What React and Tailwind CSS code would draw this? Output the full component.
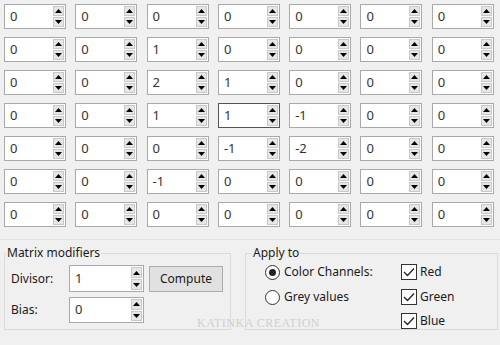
import React from "react";

const matrix = [
  [0, 0, 0, 0, 0, 0, 0],
  [0, 0, 1, 0, 0, 0, 0],
  [0, 0, 2, 1, 0, 0, 0],
  [0, 0, 1, 1, -1, 0, 0],
  [0, 0, 0, -1, -2, 0, 0],
  [0, 0, -1, 0, 0, 0, 0],
  [0, 0, 0, 0, 0, 0, 0],
];

const Arrow = ({ up }) => (
  <svg width="7" height="4" viewBox="0 0 7 4">
    <path d={up ? "M0 4 L3.5 0 L7 4 Z" : "M0 0 L3.5 4 L7 0 Z"} fill="#000" />
  </svg>
);

const Spin = ({ value, focused, className = "" }) => (
  <div
    className={`flex h-[25px] items-stretch bg-white border ${
      focused ? "border-[#555]" : "border-[#a9a9a9]"
    } ${className}`}
  >
    <div className="flex-1 flex items-center pl-[5px] text-[13px] text-[#333]">
      {value}
    </div>
    <div className="flex flex-col w-[11px] my-[1px] mr-[1px] gap-[1px]">
      <div className="flex-1 flex items-center justify-center bg-[#e6e6e6] border border-[#c9c9c9]">
        <Arrow up />
      </div>
      <div className="flex-1 flex items-center justify-center bg-[#e6e6e6] border border-[#c9c9c9]">
        <Arrow />
      </div>
    </div>
  </div>
);

const Check = () => (
  <div className="w-[16px] h-[16px] border border-[#333] bg-white flex items-center justify-center">
    <svg width="12" height="10" viewBox="0 0 12 10">
      <path d="M1 5 L4.5 8.5 L11 1.5" fill="none" stroke="#222" strokeWidth="1.3" />
    </svg>
  </div>
);

const Radio = ({ on }) => (
  <div className="w-[15px] h-[15px] rounded-full border border-[#333] bg-white flex items-center justify-center">
    {on && <div className="w-[7px] h-[7px] rounded-full bg-[#222]" />}
  </div>
);

export default function App() {
  return (
    <div
      className="w-[500px] h-[345px] bg-[#f0f0f0] overflow-hidden relative text-[#1a1a1a]"
      style={{ fontFamily: '"Noto Sans", "Open Sans", sans-serif' }}
    >
      <div className="grid grid-cols-[repeat(7,62px)] gap-x-[9.3px] gap-y-[8px] pl-[4px] pt-[4px]">
        {matrix.map((row, r) =>
          row.map((v, c) => (
            <Spin key={`${r}-${c}`} value={v} focused={r === 3 && c === 3} />
          ))
        )}
      </div>

      <div className="mt-[12px] border-t border-[#e2e2e2]" />

      <div className="flex gap-[14px] pl-[4px] pt-[4px]">
        <fieldset className="w-[227px] h-[86px] border border-[#dadada] px-[6px]">
          <legend className="text-[12px] px-[1px] -ml-[5px] leading-[18px]">
            Matrix modifiers
          </legend>
          <div className="flex items-center mt-[3px]">
            <span className="w-[58px] text-[12px]">Divisor:</span>
            <Spin value={1} className="w-[75px] h-[27px]" />
            <button className="ml-[5px] w-[74px] h-[26px] bg-[#e1e1e1] border border-[#adadad] text-[12px]">
              Compute
            </button>
          </div>
          <div className="flex items-center mt-[5px]">
            <span className="w-[58px] text-[12px]">Bias:</span>
            <Spin value={0} className="w-[75px] h-[26px]" />
          </div>
        </fieldset>

        <fieldset className="w-[253px] h-[86px] border border-[#dadada] pl-[19px]">
          <legend className="text-[12px] px-[1px] -ml-[13px] leading-[18px]">
            Apply to
          </legend>
          <div className="flex -mt-[2px] text-[12px]">
            <div className="w-[136px] flex flex-col gap-[1px]">
              <div className="h-[24px] flex items-center gap-[4px]">
                <Radio on /> Color Channels:
              </div>
              <div className="h-[24px] flex items-center gap-[4px]">
                <Radio /> Grey values
              </div>
            </div>
            <div className="flex flex-col gap-[0.5px]">
              <div className="h-[24px] flex items-center gap-[3px]">
                <Check /> Red
              </div>
              <div className="h-[24px] flex items-center gap-[3px]">
                <Check /> Green
              </div>
              <div className="h-[24px] flex items-center gap-[3px]">
                <Check /> Blue
              </div>
            </div>
          </div>
        </fieldset>
      </div>

      <div
        className="absolute left-[197px] top-[314px] text-[12px] tracking-[0.5px] text-[#cfcfcf]"
        style={{ fontFamily: '"Liberation Serif", serif' }}
      >
        KATINKA CREATION
      </div>
    </div>
  );
}
